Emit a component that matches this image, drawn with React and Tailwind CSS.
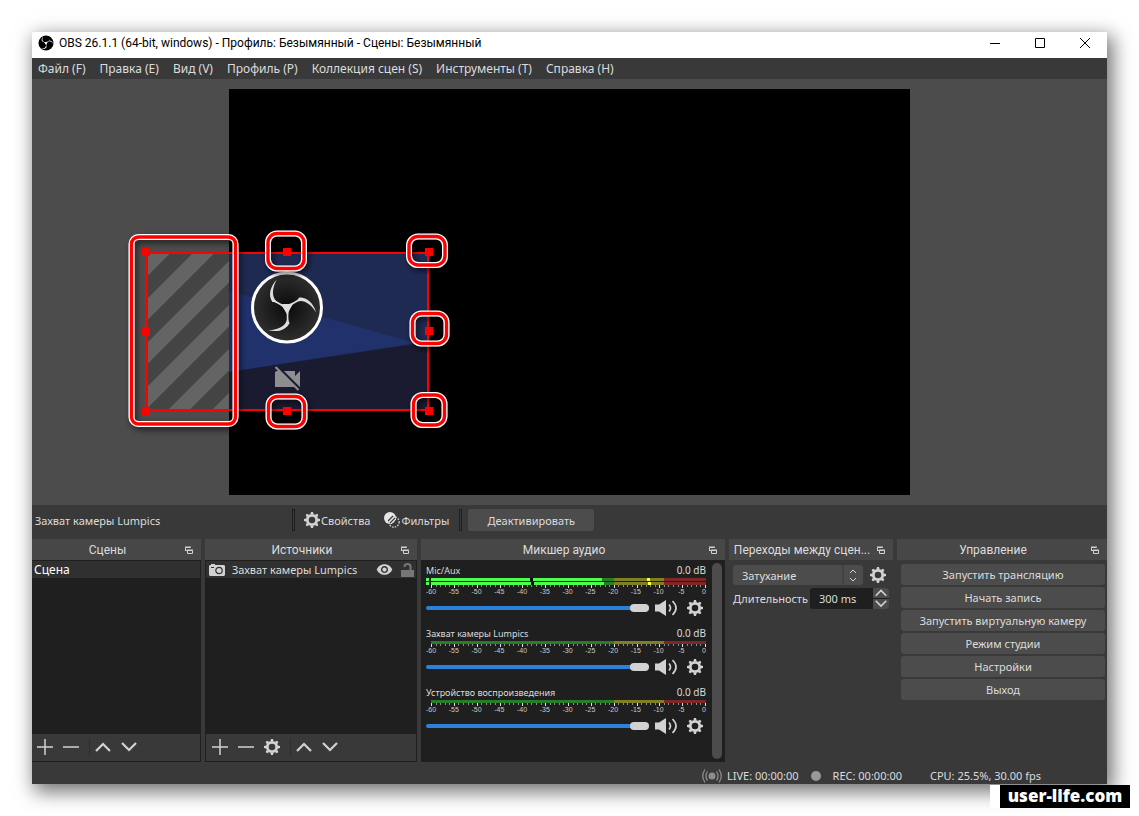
import { MdVisibility } from "react-icons/md";

const menuItems = [
  "Файл (F)",
  "Правка (E)",
  "Вид (V)",
  "Профиль (P)",
  "Коллекция сцен (S)",
  "Инструменты (T)",
  "Справка (H)",
];

const controls = [
  "Запустить трансляцию",
  "Начать запись",
  "Запустить виртуальную камеру",
  "Режим студии",
  "Настройки",
  "Выход",
];

const tracks = [
  { name: "Mic/Aux", active: true },
  { name: "Захват камеры Lumpics", active: false },
  { name: "Устройство воспроизведения", active: false },
];

const scale = [-60, -55, -50, -45, -40, -35, -30, -25, -20, -15, -10, -5, 0];

const handles = [
  [146, 252],
  [287, 252],
  [429, 252],
  [146, 331],
  [429, 331],
  [146, 411],
  [287, 411],
  [429, 411],
];

const callouts = [
  { x: 131.5, y: 237, w: 104, h: 187, r: 7 },
  { x: 268, y: 233.5, w: 36, h: 35, r: 9 },
  { x: 409, y: 236.5, w: 36, h: 28.5, r: 9 },
  { x: 412.5, y: 313.5, w: 34, h: 30, r: 9 },
  { x: 268.5, y: 396.5, w: 36, h: 30, r: 9 },
  { x: 413.5, y: 395, w: 31, h: 30, r: 9 },
];

const Gear = () => (
  <svg viewBox="0 0 16 16" className="h-4 w-4 shrink-0 text-[#d2d2d2]" fill="currentColor">
    <circle cx="8" cy="8" r="4.7" fill="none" stroke="currentColor" strokeWidth="2.8" />
    {[0, 45, 90, 135, 180, 225, 270, 315].map((a) => (
      <path key={a} d="M6.3 2.6 L7 0 H9 L9.7 2.6 Z" transform={`rotate(${a} 8 8)`} />
    ))}
  </svg>
);

const Blades = ({ fill }) => (
  <g fill={fill}>
    {[0, 120, 240].map((a) => (
      <path
        key={a}
        d="M-5.5 -3.4 C-2.5 -1.8 -0.5 2 -0.3 7 L-0.2 12 C-1 18 -8 22.5 -18.8 22.8 C-9 25.2 -0.5 22 2.6 15.4 L1.8 14 C1 8 1.2 1 5.5 -3.4 Z"
        transform={`rotate(${a})`}
      />
    ))}
  </g>
);

const FloatIcon = () => (
  <button aria-label="Открепить" className="absolute right-2 flex h-[11px] w-2 items-end">
    <svg viewBox="0 0 8 9" className="h-[9px] w-2" fill="none" stroke="#d2d2d2">
      <path d="M0.5 4.5 V1.5 H5.5 M0 1 H6" />
      <path d="M2.5 4.5 H7.5 V7.5 H2.5 Z M2 4 H8" />
      <path d="M0 4.5 H2" />
    </svg>
  </button>
);

const Chevron = ({ down = false }) => (
  <svg viewBox="0 0 16 10" className="w-4" fill="none" stroke="#d2d2d2" strokeWidth="2.2">
    <path d={down ? "M1 1 L8 8 L15 1" : "M1 9 L8 2 L15 9"} />
  </svg>
);

const Dock = ({ title, children }) => (
  <section className="flex min-w-0 flex-col">
    <header className="relative flex h-[21px] items-center justify-center bg-[#474747] pr-[22px] pl-1">
      <h2 className="font-['Roboto',sans-serif] text-xs whitespace-nowrap">{title}</h2>
      <FloatIcon />
    </header>
    {children}
  </section>
);

const ListToolbar = ({ gear = false }) => (
  <div
    className={`flex h-7 items-center gap-[10px] border border-t-0 border-[#1f1f1f] pb-[2px] ${
      gear ? "pl-[6px]" : "border-l-0 pl-[5px]"
    }`}
  >
    <button aria-label="Добавить">
      <svg viewBox="0 0 16 16" className="w-4" stroke="#d2d2d2" strokeWidth="1.5">
        <path d="M8 0 V16 M0 8 H16" />
      </svg>
    </button>
    <button aria-label="Удалить">
      <svg viewBox="0 0 16 16" className="w-4" stroke="#d2d2d2" strokeWidth="1.5">
        <path d="M0 8 H16" />
      </svg>
    </button>
    {gear && (
      <button aria-label="Свойства источника">
        <Gear />
      </button>
    )}
    <div className="flex items-center gap-[10px] border-l border-[#2f2f2f] py-1 pl-[5px]">
      <button aria-label="Вверх">
        <Chevron />
      </button>
      <button aria-label="Вниз">
        <Chevron down />
      </button>
    </div>
  </div>
);

const Preview = () => (
  <svg viewBox="229 89 681 406" className="absolute inset-0 h-full w-full overflow-visible">
    <defs>
      <pattern id="stripes" width="44" height="44" patternUnits="userSpaceOnUse" patternTransform="translate(148 254)">
        <rect width="44" height="44" fill="#444444" />
        <path d="M0 0 H21.5 L0 21.5 Z M44 0 V21.5 L21.5 44 H0 Z" fill="#646464" />
      </pattern>
      <radialGradient id="disc">
        <stop offset="0" stopColor="#0a0a0a" />
        <stop offset="1" stopColor="#302f30" />
      </radialGradient>
      <filter id="drop" x="-30%" y="-30%" width="160%" height="160%">
        <feDropShadow dx="2" dy="3" stdDeviation="3" floodColor="#000" floodOpacity="0.6" />
      </filter>
    </defs>
    <rect x="147" y="253" width="82" height="157" fill="url(#stripes)" />
    <rect x="229" y="253" width="199" height="157" fill="#1f2a53" />
    <path d="M229 291 L416 343 L229 372 Z" fill="#20316c" />
    <path d="M229 372 L428 342 V410 H229 Z" fill="#1a1b31" />
    <g transform="translate(287 307.5)">
      <circle r="34.5" fill="url(#disc)" stroke="#fff" strokeWidth="3" />
      <Blades fill="#dedede" />
    </g>
    <path d="M277 371 H295 V376 L300 371 V387 H275 V372 Z" fill="#8e8e90" />
    <path d="M277 366 L301 390" stroke="#1a1b31" strokeWidth="2.5" />
    <path d="M275.5 367 L298.5 390" stroke="#8e8e90" strokeWidth="2.2" />
    <rect x="147" y="253" width="281" height="157" fill="none" stroke="#f00" strokeWidth="2" />
    {callouts.map((c) => (
      <g key={`${c.x}-${c.y}`} fill="none" filter="url(#drop)">
        <rect x={c.x} y={c.y} width={c.w} height={c.h} rx={c.r} stroke="#fff" strokeWidth="6" />
        <rect x={c.x} y={c.y} width={c.w} height={c.h} rx={c.r} stroke="#f00" strokeWidth="3.4" />
      </g>
    ))}
    {handles.map(([x, y]) => (
      <rect key={`${x}-${y}`} x={x - 4} y={y - 4} width="8" height="8" fill="#f00" />
    ))}
  </svg>
);

const Meter = ({ active }) => (
  <>
    {active ? (
      <svg viewBox="0 0 280 7" preserveAspectRatio="none" className="h-[7px] w-full" shapeRendering="crispEdges">
        {[0, 4].map((y) => (
          <g key={y}>
            <rect x="0" y={y} width="3" height="3" fill="#4cff4c" />
            <rect x="5" y={y} width="183" height="3" fill="#267f26" />
            <rect x="5" y={y} width={y ? 173 : 171} height="3" fill="#4cff4c" />
            <rect x={y ? 105 : 104} y={y} width="3" height="3" fill="#000" />
            <rect x="188" y={y} width="50" height="3" fill="#7f7f26" />
            <rect x={y ? 222 : 221} y={y} width="3" height="3" fill="#ffff4c" />
            <rect x="238" y={y} width="42" height="3" fill="#7f2626" />
          </g>
        ))}
      </svg>
    ) : (
      <svg viewBox="0 0 280 3" preserveAspectRatio="none" className="h-[3px] w-full" shapeRendering="crispEdges">
        <rect x="5" width="183" height="3" fill="#267f26" />
        <rect x="188" width="50" height="3" fill="#7f7f26" />
        <rect x="238" width="42" height="3" fill="#7f2626" />
      </svg>
    )}
    <svg viewBox="0 0 280 3" preserveAspectRatio="none" className="h-[3px] w-full" shapeRendering="crispEdges">
      {Array.from({ length: 61 }, (_, i) => (
        <rect
          key={i}
          x={Math.round(5 + (i * 274) / 60)}
          width="1"
          height={i % 5 ? 2 : 3}
          fill={i % 5 ? "#8a8a8a" : "#e0e0e0"}
        />
      ))}
    </svg>
    <div className="flex h-[7px] justify-between pr-[2px] pl-[5px] font-['Liberation_Sans',sans-serif] text-[7px] leading-[7px] text-[#c8c8c8]">
      {scale.map((n) => (
        <span key={n} className="flex w-0 justify-center">
          {n}
        </span>
      ))}
    </div>
  </>
);

const Track = ({ name, active }) => (
  <div className="pb-[9px]">
    <div className="flex h-[15px] items-center justify-between text-[10px] leading-[15px]">
      <span className="text-[9px]">{name}</span>
      <span>0.0 dB</span>
    </div>
    <Meter active={active} />
    <div className="mt-1 flex h-[18px] items-center">
      <input
        type="range"
        defaultValue="100"
        aria-label={name}
        className="h-2 min-w-0 flex-1 appearance-none bg-transparent [&::-webkit-slider-runnable-track]:h-1 [&::-webkit-slider-runnable-track]:rounded-sm [&::-webkit-slider-runnable-track]:bg-[#2a82da] [&::-webkit-slider-thumb]:-mt-[2px] [&::-webkit-slider-thumb]:h-2 [&::-webkit-slider-thumb]:w-[19px] [&::-webkit-slider-thumb]:appearance-none [&::-webkit-slider-thumb]:rounded-sm [&::-webkit-slider-thumb]:bg-[#d2d2d2]"
      />
      <button aria-label="Выключить звук" className="ml-[6px]">
        <svg viewBox="0 0 23 16" className="w-[23px]" fill="none" stroke="#d2d2d2" strokeWidth="1.7">
          <path d="M0 4.5 H4 L11 0 V16 L4 11.5 H0 Z" fill="#d2d2d2" stroke="none" />
          <path d="M14 4.5 Q17 8 14 11.5" />
          <path d="M17.5 1 Q24.5 8 17.5 15" />
        </svg>
      </button>
      <button aria-label="Параметры" className="mr-[3px] ml-[9px]">
        <Gear />
      </button>
    </div>
  </div>
);

const Separator = () => <div className="h-[22px] w-[3px] border border-[#1f1f1f]" />;

export default function App() {
  return (
    <div className="relative flex min-h-screen flex-col bg-white p-8 font-['Noto_Sans',sans-serif] text-[11px] text-[#dcdcdc]">
      <main className="flex flex-1 flex-col bg-[#3a393a] shadow-[4px_6px_18px_2px_rgba(0,0,0,0.55)]">
        <header className="flex h-[26px] items-center bg-white pb-1 pl-[6px] text-xs text-black">
          <svg viewBox="-36 -36 72 72" className="mr-[5px] h-4 w-4">
            <circle r="34" fill="#000" />
            <g transform="scale(1.15)">
              <Blades fill="#fff" />
            </g>
          </svg>
          <h1 className="flex-1 truncate font-['Roboto',sans-serif]">
            OBS 26.1.1 (64-bit, windows) - Профиль: Безымянный - Сцены: Безымянный
          </h1>
          <button aria-label="Свернуть" className="flex w-[45px] justify-center">
            <svg viewBox="0 0 10 10" className="w-[10px]" stroke="#000">
              <path d="M0 5.5 H10" />
            </svg>
          </button>
          <button aria-label="Развернуть" className="flex w-[45px] justify-center">
            <svg viewBox="0 0 10 10" className="w-[10px]" fill="none" stroke="#000">
              <path d="M0.5 0.5 H9.5 V9.5 H0.5 Z" />
            </svg>
          </button>
          <button aria-label="Закрыть" className="flex w-[45px] justify-center">
            <svg viewBox="0 0 10 10" className="w-[10px]" stroke="#000">
              <path d="M0 0 L10 10 M10 0 L0 10" />
            </svg>
          </button>
        </header>

        <nav className="flex h-[21px] items-center gap-[14px] px-[6px] text-xs">
          {menuItems.map((item) => (
            <button key={item}>{item}</button>
          ))}
        </nav>

        <div className="flex flex-1 items-center bg-[#4c4c4c] px-[197px]">
          <div className="relative aspect-[681/406] w-full bg-black">
            <Preview />
          </div>
        </div>

        <div className="flex h-[34px] items-start pt-1">
          <div className="flex h-[22px] w-[260px] items-center pt-[2px] pl-[3px]">Захват камеры Lumpics</div>
          <Separator />
          <button className="ml-[9px] flex h-[22px] items-center">
            <Gear />
            <span className="pt-[2px] pl-px">Свойства</span>
          </button>
          <button className="ml-[14px] flex h-[22px] items-center">
            <svg viewBox="0 0 16 16" className="h-4 w-4" fill="none">
              <circle cx="6" cy="6" r="6" fill="#e6e6e6" />
              <circle cx="10" cy="10" r="5.2" stroke="#c8c8c8" strokeWidth="1.4" strokeDasharray="1.6 1.2" />
              <path d="M4 9 L9 4 M6 11 L11 6 M8 13 L13 8" stroke="#3a393a" strokeWidth="1.1" />
              <path d="M5 10 L10 5 M7 12 L12 7" stroke="#e6e6e6" strokeWidth="1" />
            </svg>
            <span className="pt-[2px] pl-px">Фильтры</span>
          </button>
          <div className="ml-[10px]">
            <Separator />
          </div>
          <button className="ml-[6px] h-[22px] w-[126px] rounded-[3px] bg-[#4c4c4c] pt-[2px]">Деактивировать</button>
        </div>

        <div className="grid h-[223px] grid-cols-[169fr_212fr_304fr_164fr_210fr] gap-1">
          <Dock title="Сцены">
            <ul className="flex-1 border border-l-0 border-[#1f1f1f] bg-[#1f1f1f]">
              <li className="h-[17px] bg-[#303030] pl-[2px] text-xs leading-[17px] text-white">Сцена</li>
            </ul>
            <ListToolbar />
          </Dock>

          <Dock title="Источники">
            <ul className="flex-1 border border-[#1f1f1f] bg-[#1f1f1f]">
              <li className="flex h-[17px] items-center bg-[#303030] pr-[2px] pl-[3px]">
                <svg viewBox="0 0 16 12" className="mr-[7px] h-3 w-4">
                  <path d="M1 1 H2 V0 H6 V1 H15 L16 2 V11 L15 12 H1 L0 11 V2 Z" fill="#d2d2d2" />
                  <path d="M2 3.5 H5" stroke="#303030" />
                  <circle cx="10" cy="6.5" r="3.2" fill="none" stroke="#303030" strokeWidth="1.2" />
                </svg>
                <span className="flex-1 pt-px whitespace-nowrap">Захват камеры Lumpics</span>
                <button aria-label="Видимость">
                  <MdVisibility size={17} color="#d2d2d2" />
                </button>
                <button aria-label="Блокировка" className="ml-2">
                  <svg viewBox="0 0 13 14" className="w-[13px]" fill="none">
                    <path d="M0 7 H13 V14 H0 Z" fill="#767676" />
                    <path d="M3.5 4 V3.5 Q3.5 1 6.5 1 T9.5 3.5 V7" stroke="#767676" strokeWidth="2" />
                  </svg>
                </button>
              </li>
            </ul>
            <ListToolbar gear />
          </Dock>

          <Dock title="Микшер аудио">
            <div className="flex flex-1 bg-[#1f1f1f] pt-[3px] pr-[3px] pb-[3px] pl-[5px]">
              <div className="min-w-0 flex-1">
                {tracks.map((track) => (
                  <Track key={track.name} {...track} />
                ))}
              </div>
              <div className="ml-[6px] w-[10px] rounded-full bg-[#4c4c4c]" />
            </div>
          </Dock>

          <Dock title="Переходы между сцен...">
            <div className="flex flex-col gap-[3px] pt-[5px] pr-1 pl-1">
              <div className="flex items-center">
                <div className="relative h-5 flex-1">
                  <select
                    aria-label="Переход"
                    className="h-5 w-full appearance-none rounded-[3px] bg-[#4c4c4c] pt-px pl-[9px] leading-5"
                  >
                    <option>Затухание</option>
                  </select>
                  <svg
                    viewBox="0 0 20 20"
                    className="pointer-events-none absolute top-0 right-0 h-5 w-[21px]"
                    fill="none"
                    stroke="#d2d2d2"
                  >
                    <path d="M0.5 0 V20" stroke="#3a393a" />
                    <path d="M7.5 8 L10.5 5 L13.5 8 M7.5 13 L10.5 16 L13.5 13" />
                  </svg>
                </div>
                <button aria-label="Свойства перехода" className="mr-[3px] ml-[7px]">
                  <Gear />
                </button>
              </div>
              <div className="flex items-center justify-between">
                <label htmlFor="duration" className="pt-px">
                  Длительность
                </label>
                <div className="flex h-[21px] w-[79px] overflow-hidden rounded-[3px] bg-[#1f1f1f]">
                  <input id="duration" defaultValue="300 ms" className="min-w-0 flex-1 bg-transparent pt-px pl-[9px]" />
                  <div className="flex w-4 flex-col gap-px">
                    <button aria-label="Больше" className="flex flex-1 items-center justify-center bg-[#4c4c4c] px-[2px]">
                      <Chevron />
                    </button>
                    <button aria-label="Меньше" className="flex flex-1 items-center justify-center bg-[#4c4c4c] px-[2px]">
                      <Chevron down />
                    </button>
                  </div>
                </div>
              </div>
            </div>
          </Dock>

          <Dock title="Управление">
            <div className="flex flex-col gap-[2px] pt-1 pr-[2px] pl-1">
              {controls.map((label) => (
                <button key={label} className="h-[21px] rounded-[3px] bg-[#4c4c4c] pt-px">
                  {label}
                </button>
              ))}
            </div>
          </Dock>
        </div>

        <footer className="flex h-[22px] items-center justify-end pt-[6px] pr-[66px]">
          <svg viewBox="0 0 20 14" className="mr-[5px] w-5" fill="none" stroke="#8c8c8c" strokeWidth="1.3">
            <circle cx="10" cy="7" r="3.5" fill="#8c8c8c" stroke="none" />
            <path d="M5.5 2.5 Q2.5 7 5.5 11.5 M14.5 2.5 Q17.5 7 14.5 11.5" />
            <path d="M3 0.5 Q-1.5 7 3 13.5 M17 0.5 Q21.5 7 17 13.5" />
          </svg>
          <span>LIVE: 00:00:00</span>
          <span className="mx-3 h-[10px] w-[10px] rounded-full bg-[#999999]" />
          <span>REC: 00:00:00</span>
          <span className="ml-7">CPU: 25.5%, 30.00 fps</span>
        </footer>
      </main>

      <a
        href="#"
        className="absolute right-[9px] bottom-2 flex h-[23px] w-[140px] items-center justify-center border-l-10 border-white bg-black pb-[3px] font-['Open_Sans',sans-serif] text-[17px] leading-none font-extrabold text-white"
      >
        user-life.com
      </a>
    </div>
  );
}
